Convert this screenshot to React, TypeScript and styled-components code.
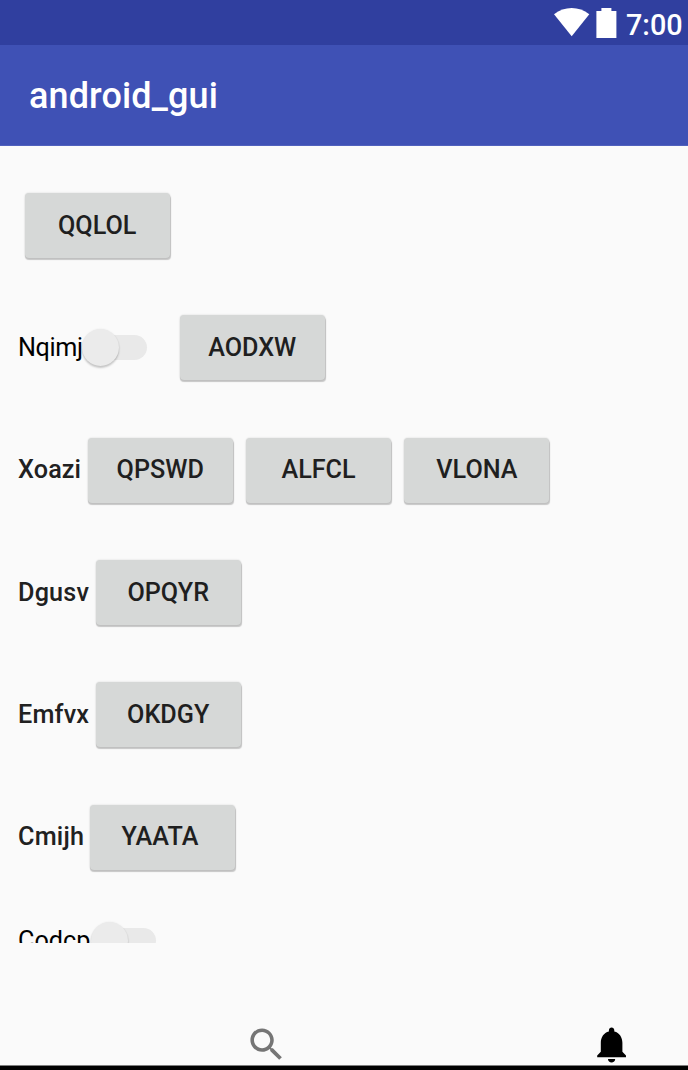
import React from "react";
import styled, { createGlobalStyle } from "styled-components";

const GlobalStyle = createGlobalStyle`
  body { margin: 0; background: #fafafa; }
  * { box-sizing: border-box; }
`;

const Screen = styled.div`
  width: 688px;
  height: 1070px;
  display: flex;
  flex-direction: column;
  overflow: hidden;
  background: #fafafa;
  font-family: Roboto, "Liberation Sans", sans-serif;
`;

const StatusBar = styled.header`
  height: 45px;
  flex: none;
  display: flex;
  justify-content: flex-end;
  padding-right: 6px;
  background: #303f9f;
  color: #fff;
`;

const StatusIcons = styled.svg`
  width: 70px;
  height: 45px;
  margin-right: 3px;
`;

const Clock = styled.span`
  font-size: 28.8px;
  line-height: 50px;
  font-weight: 500;
  width: 56px;
  white-space: nowrap;
`;

const Toolbar = styled.div`
  height: 101px;
  flex: none;
  display: flex;
  align-items: center;
  padding: 2px 0 0 29px;
  background: #3f51b5;
  border-bottom: 1px solid #5061bd;
`;

const Title = styled.h1`
  margin: 0;
  color: #fff;
  font-size: 36px;
  font-weight: 500;
  line-height: 42px;
  letter-spacing: 0.12px;
`;

const Content = styled.main`
  height: 797px;
  flex: none;
  overflow: hidden;
  padding: 18.4px 18px 0;
`;

const Row = styled.div<{ $compact?: boolean }>`
  height: ${(p) => (p.$compact ? 85 : 122.35)}px;
  display: flex;
  align-items: center;
`;

const Label = styled.span<{ $width: number; $regular?: boolean; $spacing?: number }>`
  width: ${(p) => p.$width}px;
  flex: none;
  font-size: 25.2px;
  line-height: 30px;
  white-space: nowrap;
  letter-spacing: ${(p) => p.$spacing ?? 0}px;
  font-weight: ${(p) => (p.$regular ? 400 : 500)};
  color: ${(p) => (p.$regular ? "#000" : "#212121")};
`;

const Button = styled.button<{ $shift?: number }>`
  width: 145px;
  height: 65px;
  flex: none;
  margin: 0 6.7px;
  padding: 0;
  border: 0;
  border-radius: 4px;
  background: #d6d8d7;
  box-shadow: 0.5px 2px 1px rgba(0, 0, 0, 0.2), 0 0 2px rgba(0, 0, 0, 0.16);
  color: #1f1f1f;
  font: 500 25.2px/30px Roboto, "Liberation Sans", sans-serif;
  text-indent: ${(p) => p.$shift ?? 0}px;
`;

const Switch = styled.div`
  width: 65px;
  height: 38px;
  flex: none;
  margin-right: 26px;
  display: flex;
  align-items: center;
`;

const Thumb = styled.span`
  width: 37px;
  height: 37px;
  flex: none;
  border-radius: 50%;
  background: #ebebeb;
  box-shadow: 0 2px 2px rgba(0, 0, 0, 0.2), 0 0 2px rgba(0, 0, 0, 0.08);
  z-index: 1;
`;

const Track = styled.span`
  width: 46px;
  height: 25px;
  flex: none;
  margin-left: -18px;
  border-radius: 13px;
  background: #e9e9e9;
`;

const BottomBar = styled.nav`
  flex: 1;
  display: flex;
  align-items: flex-end;
  justify-content: space-between;
  padding: 0 55px 0 244.5px;
  border-bottom: 4px solid #000;
  box-shadow: inset 0 -1px 0 #7d7d7d;
`;

const NavIcon = styled.svg<{ $color: string }>`
  width: 43.2px;
  height: 43.2px;
  fill: ${(p) => p.$color};
`;

type RowData = {
  label?: string;
  width?: number;
  spacing?: number;
  toggle?: boolean;
  shift?: number;
  buttons: string[];
};

const rows: RowData[] = [
  { buttons: ["QQLOL"] },
  { label: "Nqimj", width: 64, spacing: -0.4, toggle: true, buttons: ["AODXW"] },
  { label: "Xoazi", width: 63, spacing: 0.1, buttons: ["QPSWD", "ALFCL", "VLONA"] },
  { label: "Dgusv", width: 71, spacing: 0.2, buttons: ["OPQYR"] },
  { label: "Emfvx", width: 71, spacing: 0.2, buttons: ["OKDGY"] },
  { label: "Cmijh", width: 65.8, spacing: 0.2, shift: -6, buttons: ["YAATA"] },
  { label: "Codcp", width: 73, toggle: true, buttons: [] },
];

export default function App() {
  return (
    <Screen>
      <GlobalStyle />
      <StatusBar>
        <StatusIcons viewBox="0 0 70 45" fill="#fff">
          <path d="M1 14.2C6.3 10.2 12.3 8 18.7 8s12.3 2.2 17.6 6.2L18.7 36.2z" />
          <path d="M43.4 11h5V8h10v3h5v27h-20z" />
        </StatusIcons>
        <Clock>7:00</Clock>
      </StatusBar>
      <Toolbar>
        <Title>android_gui</Title>
      </Toolbar>
      <Content>
        {rows.map((row, i) => (
          <Row key={i} $compact={row.buttons.length === 0}>
            {row.label && (
              <Label $width={row.width ?? 0} $regular={row.toggle} $spacing={row.spacing}>
                {row.label}
              </Label>
            )}
            {row.toggle && (
              <Switch>
                <Thumb />
                <Track />
              </Switch>
            )}
            {row.buttons.map((text) => (
              <Button key={text} $shift={row.shift}>
                {text}
              </Button>
            ))}
          </Row>
        ))}
      </Content>
      <BottomBar>
        <NavIcon viewBox="0 0 24 24" $color="#757575">
          <path d="M15.5 14h-.79l-.28-.27C15.41 12.59 16 11.11 16 9.5 16 5.91 13.09 3 9.5 3S3 5.91 3 9.5 5.91 16 9.5 16c1.61 0 3.09-.59 4.23-1.57l.27.28v.79l5 4.99L20.49 19l-4.99-5zm-6 0C7.01 14 5 11.99 5 9.5S7.01 5 9.5 5 14 7.01 14 9.5 11.99 14 9.5 14z" />
        </NavIcon>
        <NavIcon viewBox="0 0 24 24" $color="#000">
          <path d="M12 22c1.1 0 2-.9 2-2h-4c0 1.1.89 2 2 2zm6-6v-5c0-3.07-1.64-5.64-4.5-6.32V4c0-.83-.67-1.5-1.5-1.5s-1.5.67-1.5 1.5v.68C7.63 5.36 6 7.92 6 11v5l-2 2v1h16v-1l-2-2z" />
        </NavIcon>
      </BottomBar>
    </Screen>
  );
}
